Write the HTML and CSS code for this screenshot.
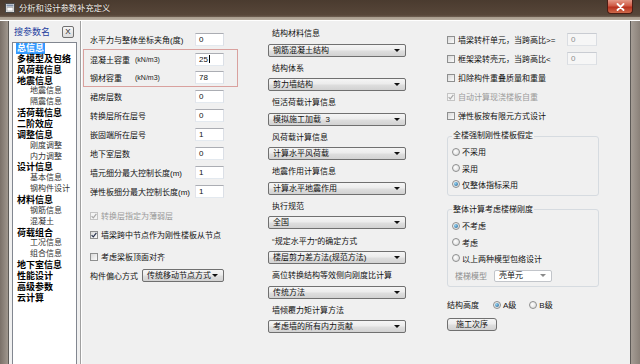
FILE: index.html
```html
<!DOCTYPE html>
<html lang="zh">
<head>
<meta charset="utf-8">
<title>分析和设计参数补充定义</title>
<link rel="stylesheet" href="styles.css">
</head>
<body>
<div class="window">
  <div class="titlebar">
    <svg class="appicon" width="10" height="10" viewBox="0 0 10 10">
      <rect x="0.5" y="0.5" width="9" height="9" fill="#e8e8e8" stroke="#4a4a4a"/>
      <rect x="1.5" y="1.5" width="7" height="2" fill="#7f8fa8"/>
      <rect x="2" y="4.5" width="6" height="3.5" fill="#fff" stroke="#9a9a9a" stroke-width="0.6"/>
    </svg>
    <span class="title">分析和设计参数补充定义</span>
    <span class="close"><svg width="9" height="8" viewBox="0 0 9 8"><path d="M1.5 1 L7.5 7 M7.5 1 L1.5 7" stroke="#fff" stroke-width="1.8" stroke-linecap="round"/></svg></span>
  </div>
  <div class="body">
    <div class="frame-l"></div>
    <div class="client">
      <div class="side">
        <div class="side-head"><span class="search">搜参数名</span><span class="xbtn">X</span></div>
        <ul class="tree">
          <li class="p cur"><span>总信息</span></li>
          <li class="p"><span>多模型及包络</span></li>
          <li class="p"><span>风荷载信息</span></li>
          <li class="p"><span>地震信息</span></li>
          <li class="c">地震信息</li>
          <li class="c">隔震信息</li>
          <li class="p"><span>活荷载信息</span></li>
          <li class="p"><span>二阶效应</span></li>
          <li class="p"><span>调整信息</span></li>
          <li class="c">刚度调整</li>
          <li class="c">内力调整</li>
          <li class="p"><span>设计信息</span></li>
          <li class="c">基本信息</li>
          <li class="c">钢构件设计</li>
          <li class="p"><span>材料信息</span></li>
          <li class="c">钢筋信息</li>
          <li class="c">混凝土</li>
          <li class="p"><span>荷载组合</span></li>
          <li class="c">工况信息</li>
          <li class="c">组合信息</li>
          <li class="p"><span>地下室信息</span></li>
          <li class="p"><span>性能设计</span></li>
          <li class="p"><span>高级参数</span></li>
          <li class="p"><span>云计算</span></li>
        </ul>
      </div>
      <div class="main">
        <div class="col col1">
          <div class="row"><span class="lbl">水平力与整体坐标夹角(度)</span><span class="txt">0</span></div>
          <div class="redbox">
            <div class="row"><span class="lbl"><span class="name">混凝土容重</span><span class="unit">(kN/m3)</span></span><span class="txt">25<span class="caret"></span></span></div>
            <div class="row"><span class="lbl"><span class="name">钢材容重</span><span class="unit">(kN/m3)</span></span><span class="txt">78</span></div>
          </div>
          <div class="row"><span class="lbl">裙房层数</span><span class="txt">0</span></div>
          <div class="row"><span class="lbl">转换层所在层号</span><span class="txt">0</span></div>
          <div class="row"><span class="lbl">嵌固端所在层号</span><span class="txt">1</span></div>
          <div class="row"><span class="lbl">地下室层数</span><span class="txt">0</span></div>
          <div class="row"><span class="lbl">墙元细分最大控制长度(m)</span><span class="txt">1</span></div>
          <div class="row"><span class="lbl">弹性板细分最大控制长度(m)</span><span class="txt">1</span></div>
          <div class="row gap5 disabled"><span class="cb dis"><svg width="6" height="6" viewBox="0 0 6 6"><path d="M0.6 3.2 L2.3 4.9 L5.4 0.8" fill="none" stroke="#a8a8a8" stroke-width="1.2"/></svg></span>转换层指定为薄弱层</div>
          <div class="row"><span class="cb"><svg width="6" height="6" viewBox="0 0 6 6"><path d="M0.6 3.2 L2.3 4.9 L5.4 0.8" fill="none" stroke="#2a3550" stroke-width="1.2"/></svg></span>墙梁跨中节点作为刚性楼板从节点</div>
          <div class="row gap3"><span class="cb"></span>考虑梁板顶面对齐</div>
          <div class="row"><span class="lbl short">构件偏心方式</span><span class="combo w82">传统移动节点方式</span></div>
        </div>
        <div class="col col2">
          <div class="grp"><div class="cap">结构材料信息</div><div class="combo full">钢筋混凝土结构</div></div>
          <div class="grp"><div class="cap">结构体系</div><div class="combo full">剪力墙结构</div></div>
          <div class="grp"><div class="cap">恒活荷载计算信息</div><div class="combo full">模拟施工加载&nbsp;&nbsp;3</div></div>
          <div class="grp"><div class="cap">风荷载计算信息</div><div class="combo full">计算水平风荷载</div></div>
          <div class="grp"><div class="cap">地震作用计算信息</div><div class="combo full">计算水平地震作用</div></div>
          <div class="grp"><div class="cap">执行规范</div><div class="combo full">全国</div></div>
          <div class="grp"><div class="cap">“规定水平力”的确定方式</div><div class="combo full">楼层剪力差方法(规范方法)</div></div>
          <div class="grp"><div class="cap">高位转换结构等效侧向刚度比计算</div><div class="combo full">传统方法</div></div>
          <div class="grp"><div class="cap">墙倾覆力矩计算方法</div><div class="combo full">考虑墙的所有内力贡献</div></div>
        </div>
        <div class="col col3">
          <div class="crow"><span class="cb"></span>墙梁转杆单元，当跨高比&gt;=<span class="txt dis">0</span></div>
          <div class="crow"><span class="cb"></span>框架梁转壳元，当跨高比&lt;<span class="txt dis">0</span></div>
          <div class="crow"><span class="cb"></span>扣除构件重叠质量和重量</div>
          <div class="crow disabled"><span class="cb dis"><svg width="6" height="6" viewBox="0 0 6 6"><path d="M0.6 3.2 L2.3 4.9 L5.4 0.8" fill="none" stroke="#a8a8a8" stroke-width="1.2"/></svg></span>自动计算现浇楼板自重</div>
          <div class="crow"><span class="cb"></span>弹性板按有限元方式设计</div>
          <fieldset class="gb g1">
            <legend>全楼强制刚性楼板假定</legend>
            <div class="rrow"><span class="rd"></span>不采用</div>
            <div class="rrow"><span class="rd"></span>采用</div>
            <div class="rrow"><span class="rd on"></span>仅整体指标采用</div>
          </fieldset>
          <fieldset class="gb g2">
            <legend>整体计算考虑楼梯刚度</legend>
            <div class="rrow"><span class="rd on"></span>不考虑</div>
            <div class="rrow"><span class="rd"></span>考虑</div>
            <div class="rrow"><span class="rd"></span>以上两种模型包络设计</div>
            <div class="srow"><span class="slbl">楼梯模型</span><span class="combo dis w58">壳单元</span></div>
          </fieldset>
          <div class="hrow"><span class="hlbl">结构高度</span><span class="rd on"></span>A级<span class="rd b"></span>B级</div>
          <div class="btn">施工次序</div>
        </div>
      </div>
    </div>
    <div class="frame-r"></div>
  </div>
</div>
</body>
</html>
```

FILE: styles.css
```css
* { box-sizing: border-box; margin: 0; padding: 0; }
html, body { width: 640px; height: 364px; overflow: hidden; }
body {
  font-family: "Liberation Sans", "Noto Sans CJK SC", sans-serif;
  font-size: 8px;
  color: #111;
  background: #5a4a3c;
}
.window { width: 640px; height: 364px; display: flex; flex-direction: column; }

/* title bar */
.titlebar {
  height: 21px; flex: none; display: flex; align-items: flex-start;
  background: linear-gradient(#4a3b2f 0, #574639 15px, #6e5f52 17px, #a79b8c 17px, #b8ad9f 20px, #ffffff 20px);
}
.appicon { margin: 3px 0 0 5px; flex: none; }
.title {
  margin-left: 4px; line-height: 17px; font-size: 8.3px; color: #f4f0ea;
  text-shadow: 0 0 2px rgba(0,0,0,.6); white-space: nowrap;
}
.close {
  margin-left: auto; margin-right: 7px; width: 26px; height: 14px;
  display: flex; align-items: center; justify-content: center;
  background: linear-gradient(#e49a88, #cf5a45 45%, #b8321f 55%, #cf6a4a);
  border: 1px solid #4b1d14; border-top: 0; border-radius: 0 0 4px 4px;
}

/* frame */
.body { flex: 1; display: flex; min-height: 0; }
.frame-l { width: 9px; flex: none; background: linear-gradient(90deg, #7a7068, #a0978e); border-right: 1px solid #5d5a57; }
.frame-r { width: 10px; flex: none; background: linear-gradient(90deg, #a59d95, #8a8179); border-left: 1px solid #5d5a57; }
.client { flex: 1; display: flex; background: #f0f0f0; min-width: 0; }

/* side tree */
.side { width: 71px; flex: none; display: flex; flex-direction: column; }
.side-head { height: 21px; flex: none; display: flex; align-items: center; padding-left: 5px; }
.search { font-size: 9px; color: #1d3d9e; white-space: nowrap; }
.xbtn {
  margin-left: 12px; width: 12px; height: 12px; border: 1px solid #707070; border-radius: 2px;
  background: linear-gradient(#f6f6f6, #dcdcdc); font-size: 8px; line-height: 10px; text-align: center; color: #222;
}
.tree {
  list-style: none; margin-left: 3px; width: 65px; flex: 1; background: #fff;
  border: 1px solid #828790; border-bottom: 0; overflow: hidden;
}
.tree li { height: 10.87px; line-height: 10.87px; white-space: nowrap; }
.tree .p { font-weight: bold; font-size: 9px; padding-left: 3px; color: #000; }
.tree .p span { display: inline-block; padding: 0 1px; height: 10.87px; line-height: 10.87px; }
.tree .cur span { background: #3399ff; color: #fff; }
.tree .c { font-size: 8px; padding-left: 17px; color: #333; }

/* main area */
.main {
  flex: 1; display: flex; align-items: flex-start;
  border-left: 1px solid #a0a0a0; box-shadow: inset 1px 0 0 #ffffff;
}
.col1 { width: 155px; margin-left: 2px; padding-top: 9px; flex: none; }
.col2 { width: 138px; margin-left: 30px; padding-top: 7px; flex: none; }
.col3 { width: 153px; margin-left: 41px; padding-top: 9px; flex: none; }

.row { display: flex; align-items: center; height: 19px; padding-left: 7px; white-space: nowrap; }
.row .lbl { width: 105px; flex: none; display: flex; align-items: center; }
.row .lbl.short { width: 52px; }
.gap5 { margin-top: 5px; }
.gap3 { margin-top: 3px; }
.disabled { color: #9a9a9a; }

.redbox { border: 1px solid #d9a19e; }
.redbox .row { height: 18px; padding-left: 6px; }
.redbox .name { display: inline-block; width: 45px; }
.redbox .unit { font-size: 7px; color: #222; }

.txt {
  width: 29px; height: 13px; flex: none; display: flex; align-items: center;
  background: #fff; border: 1px solid; border-color: #abadb3 #dbdfe6 #e3e9ef #e2e3ea;
  padding-left: 3px; line-height: 11px; color: #111;
}
.caret { display: inline-block; width: 1px; height: 8px; background: #000; margin-left: 1px; }
.txt.dis {
  margin-left: auto; margin-right: 3px; width: 30px;
  background: #f6f6f6; border-color: #c9ccd2 #dadde2 #dfe2e6 #dadde2; color: #8f8f8f;
}

.combo {
  display: flex; align-items: center; height: 13px; white-space: nowrap; flex: none;
  border: 1px solid #707070; border-radius: 2px; padding-left: 4px; line-height: 11px;
  background: linear-gradient(#f5f5f5, #ececec 45%, #dedede 55%, #d2d2d2);
  color: #111;
}
.combo::after {
  content: ""; margin-left: auto; margin-right: 5px; flex: none;
  border-left: 3px solid transparent; border-right: 3px solid transparent; border-top: 3px solid #111;
}
.combo.full { width: 138px; }
.combo.w82 { width: 82px; }
.combo.dis { background: #fff; border-color: #c2c5ca; height: 12px; }
.combo.dis::after { border-top-color: #8a8a8a; }
.combo.w58 { width: 58px; }

.grp { margin-bottom: 6.1px; }
.grp .cap { height: 12px; line-height: 12px; padding-left: 4px; white-space: nowrap; }
.grp .combo { margin-top: 3.5px; }

/* checkboxes / radios */
.cb {
  width: 8px; height: 8px; flex: none; margin-right: 3px;
  border: 1px solid #8e8f8f; background: linear-gradient(135deg, #d9d9d9, #fbfbfb);
  display: flex; align-items: center; justify-content: center;
}
.cb.dis { border-color: #c4c4c4; background: #f4f4f4; }
.crow { display: flex; align-items: center; height: 19px; white-space: nowrap; }

.gb {
  width: 152px; margin-top: 5px; border: 1px solid #d6dbe0; border-radius: 3px;
  padding: 1.5px 4px 2.3px 4px; min-width: 0;
}
.gb legend { padding: 0 1px; line-height: 12px; font-size: 8px; white-space: nowrap; }
.g2 { margin-top: 8px; padding-bottom: 1px; }
.rrow { display: flex; align-items: center; height: 16.4px; white-space: nowrap; }
.rd {
  width: 8px; height: 8px; flex: none; margin-right: 2px; border-radius: 50%;
  border: 1px solid #8e8f8f; background: radial-gradient(circle at 40% 40%, #ffffff, #d6d6d6);
  display: flex; align-items: center; justify-content: center;
}
.rd.on::after {
  content: ""; width: 4px; height: 4px; border-radius: 50%;
  background: radial-gradient(circle at 35% 35%, #93d3f3, #1d5b8c);
}
.srow { display: flex; align-items: center; height: 18px; padding-left: 3px; white-space: nowrap; }
.slbl { width: 39px; color: #8d8d8d; flex: none; }

.hrow { display: flex; align-items: center; height: 18px; margin-top: 9px; white-space: nowrap; }
.hlbl { width: 46px; flex: none; }
.rd.b { margin-left: 13px; }

.btn {
  margin-top: 4px; width: 50px; height: 13px; line-height: 11px; text-align: center;
  border: 1px solid #707070; border-radius: 3px;
  background: linear-gradient(#f5f5f5, #ececec 45%, #dedede 55%, #d2d2d2);
}
```
